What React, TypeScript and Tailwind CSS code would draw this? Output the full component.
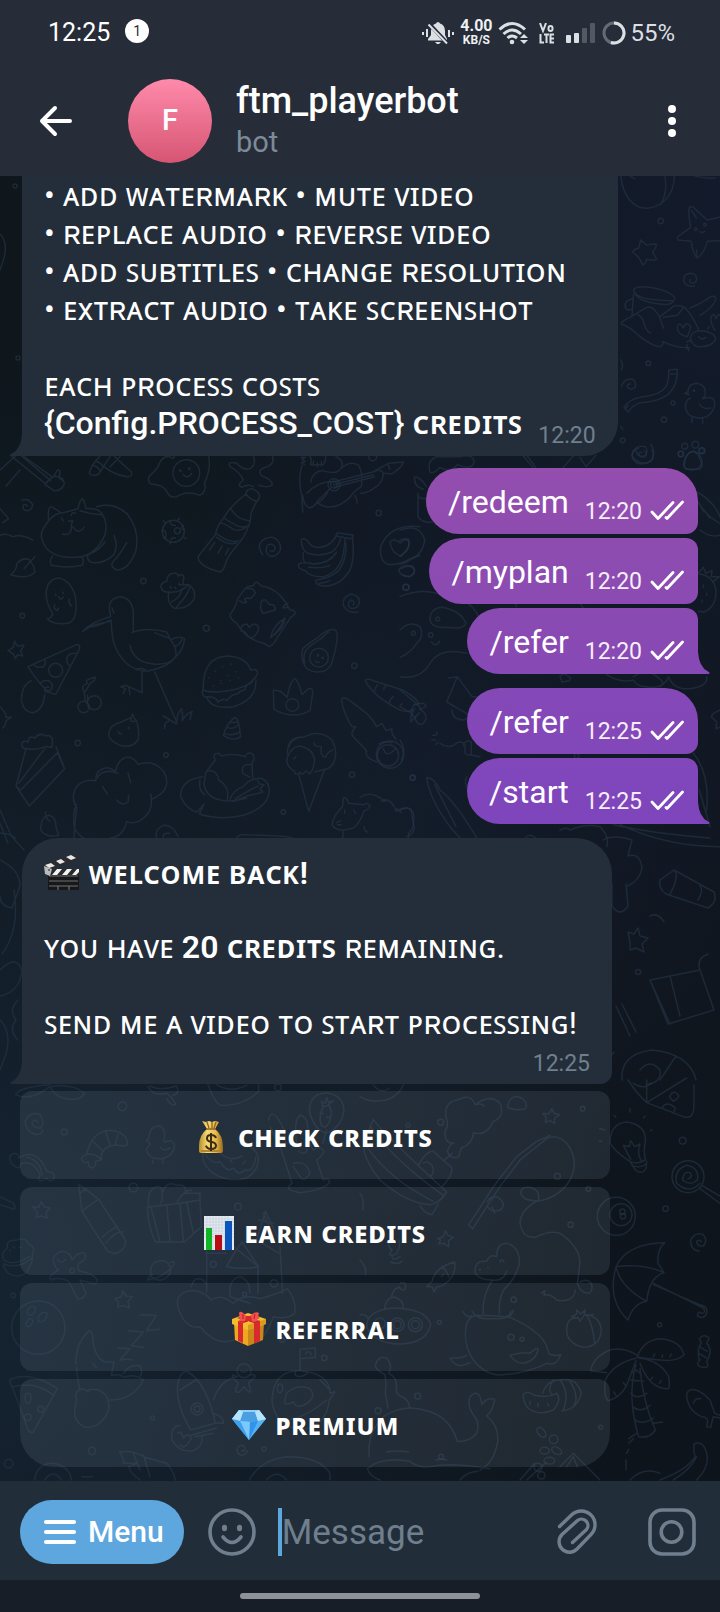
import type { ReactNode } from "react";

const ROBOTO = "font-[Roboto,'Noto_Sans','Liberation_Sans',sans-serif]";

/* ---------- wallpaper ---------- */

function Doodles() {
  return (
    <svg
      aria-hidden="true"
      className="absolute inset-x-0 bottom-0 h-[1305px] w-full"
      viewBox="0 176 720 1305"
      preserveAspectRatio="xMidYMax slice"
      fill="none"
      stroke="#253647"
      strokeOpacity="0.62"
      strokeWidth="4.5"
      strokeLinecap="round"
      strokeLinejoin="round"
    >
      {/* upper right: beach ball, starfish, jar, chick */}
      <g transform="translate(600 170) scale(.33333)">
        <path d="M62 20C70 80 100 115 140 115C190 112 222 70 223 20M195 20C200 50 196 80 182 103M90 18l14 8M285 18q30 8 60 6" />
        <circle cx="182" cy="153" r="8" />
        <path d="M268 112Q278 104 290 122L322 150L366 140M366 212L322 214Q312 250 292 264Q278 250 274 214L234 210Q228 200 242 194L272 172Q264 130 268 112M300 184q6 8 14 0M290 240v20M275 122l14 22" />
        <circle cx="287" cy="178" r="4" /><circle cx="315" cy="164" r="4" />
        <path d="M122 210L138 224L168 222Q172 228 158 246L170 268Q164 274 140 268Q134 286 128 284L116 262L98 246Q98 240 116 234Z" />
        <path d="M284 348Q258 352 251 334Q249 312 270 310Q290 310 290 328Q288 340 276 340Q266 338 270 328" />
        <path d="M100 362Q105 346 150 352Q210 362 224 384Q222 408 180 402Q110 394 100 362M104 368Q120 392 222 392M98 386Q72 390 76 412Q80 424 94 418M100 375L96 440M64 462Q60 456 90 442L140 412Q160 404 180 444Q186 460 190 474M64 462Q90 470 120 500Q160 530 180 530Q192 526 188 514Q220 532 268 534M114 434Q130 444 134 466Q140 484 152 490M180 440L222 408Q240 404 256 414Q280 440 296 480M270 414Q300 402 320 388Q340 372 348 384Q344 410 300 436M190 442L232 436L250 414" />
        <path d="M272 500Q280 476 316 484Q350 492 346 510Q330 534 292 530Q270 520 272 500M296 500q10 12 22 2M262 500Q230 494 232 470Q238 452 250 474Q258 450 272 470Q270 486 262 500M344 480Q326 450 336 436Q344 428 348 446Q356 428 360 436M260 516l12-6M266 542l-6-18M322 478l6-8" />
        <circle cx="145" cy="580" r="7" /><circle cx="219" cy="699" r="6" /><circle cx="192" cy="749" r="8" /><circle cx="68" cy="811" r="7" />
        <path d="M206 600L232 598Q234 650 200 676Q170 696 120 698Q98 706 84 726L72 712Q90 684 130 680Q180 676 198 650Q208 630 206 600ZM212 612h16M76 718l8-12" />
        <path d="M64 648Q76 622 98 628Q112 640 104 654Q92 662 82 652Q80 640 92 642M62 570q10 14 2 30M62 770l6 8" />
        <path d="M264 670Q262 642 290 640Q316 644 316 668Q314 684 308 686Q346 674 344 704Q336 744 298 744Q256 742 256 706Q258 690 272 684M264 664l-10 6 12 4M298 702q10 18 34 12M276 744v14M308 744v16" />
        <circle cx="282" cy="662" r="2" />
        <path d="M152 822Q168 846 156 870Q138 886 112 880Q90 866 98 844Q112 824 136 830Q146 844 136 860Q124 866 116 854Q118 844 126 848" />
        <path d="M254 880Q256 848 278 844Q296 848 300 870Q312 886 300 898H258Q250 892 254 880" />
        <circle cx="254" cy="829" r="9" /><circle cx="286" cy="824" r="10" /><circle cx="306" cy="842" r="9" /><circle cx="243" cy="852" r="8" />
      </g>

      {/* middle */}
      <g transform="translate(0 450) scale(.33333)">
        <path d="M30 15L135 100M70 18L158 82M60 14L152 92M135 104Q145 88 162 80Q174 50 180 64L178 84Q200 96 190 108Q180 124 162 122L135 104M162 80Q186 78 192 96" />
        <path d="M300 18Q270 50 268 70Q280 82 296 72Q310 50 330 20M344 20L394 66Q400 80 380 80Q340 74 312 50M276 46q16 2 24 16M360 20L330 50M286 34q16 4 22 14" />
        <path d="M478 40Q490 15 510 20Q520 30 524 18M478 40Q472 60 450 76Q440 90 452 102Q490 104 500 124Q510 146 530 140Q560 120 600 136Q620 128 614 98Q634 56 626 20" />
        <circle cx="559" cy="69" r="40" /><circle cx="541" cy="62" r="2" /><circle cx="568" cy="56" r="2" />
        <path d="M550 74q14 14 25-4M66 150Q86 144 98 164Q96 182 80 182Q66 180 70 166Q76 160 82 168" />
        <path d="M690 50Q680 32 710 40Q728 62 750 56Q770 42 760 20M690 50Q720 66 730 90Q708 106 726 112Q744 100 760 110M818 20Q826 44 790 54Q770 64 786 78Q820 90 816 106Q800 114 776 106" />
        <path d="M738 132Q738 116 756 116Q782 128 778 142L772 154Q750 150 738 132M738 132Q690 170 672 202Q650 230 646 254Q610 300 594 320Q596 350 660 366Q672 364 680 330Q690 310 720 276Q746 240 752 206Q750 190 770 154M694 178Q710 208 748 212M672 204Q690 216 708 226Q730 236 746 226M660 218L682 226L700 238Q720 246 738 232M648 250Q690 282 716 272M650 262Q690 290 710 278M628 300l16-22M654 310l12-22M676 314l10-18" />
        <path d="M130 236Q156 188 190 188L234 176Q240 146 248 146Q256 160 258 176Q290 174 304 188Q326 220 314 256Q286 318 230 322Q170 326 140 296Q114 260 130 236M146 210Q142 176 152 170Q166 176 180 186M290 170Q340 156 380 190Q420 240 408 300Q388 360 350 360Q330 352 338 336Q356 320 380 278M342 256Q356 290 340 316Q310 342 276 338Q258 330 264 314Q300 300 314 276M158 318Q146 330 154 346Q200 356 246 346Q254 332 246 322M184 204l6 8M214 196q2-12 14-6M206 214l12-2-4 12q2 36-26 28M218 230q16 26 34 2M240 182q30 10 64 12" />
        <path d="M32 374Q50 362 50 342Q66 322 86 328Q106 350 104 366Q84 390 32 374M72 356L104 320M0 176L26 206L8 218M0 256Q20 248 38 260Q66 252 98 270" />
        <circle cx="520" cy="244" r="33" /><circle cx="532" cy="242" r="9" />
        <path d="M486 242q10-4 12 10t-8 12M510 214q2 14 16 12M548 226q-8 10 4 14M512 270q4-10 14-6M496 218l-6-6M534 210l4-6M552 262l6 4M512 276l-2 6" />
        <path d="M788 314Q774 296 780 280Q794 260 818 262Q842 270 842 298Q830 324 808 318Q792 304 802 286Q818 276 826 294Q822 308 810 302" />
        <path d="M904 22h12l-10 6 10 6-12 4 10 6M906 46Q892 90 906 138L908 186M930 20Q936 30 932 44H970Q980 30 976 18M940 34v12M952 38v12M964 34v12M1008 20Q1030 30 1026 50M932 96Q940 60 970 62Q1010 76 1022 56Q1050 30 1076 46Q1090 70 1084 110Q1060 124 1050 142Q1010 180 970 168L954 160Q980 140 984 122M920 130Q960 90 1004 96M908 136Q912 170 930 174Q944 170 956 150L990 116M1000 96L1118 66Q1140 54 1150 68Q1150 100 1120 116Q1100 130 1082 130M1000 104L1120 74M1002 112L1124 80M1118 66L1166 40L1210 36Q1206 52 1176 72L1154 70M1164 44l6 14M1064 136q8 12 8 24" />
        <circle cx="1002" cy="104" r="18" /><circle cx="1002" cy="104" r="10" /><circle cx="1136" cy="189" r="8" /><circle cx="1118" cy="20" r="12" />
        <path d="M904 270Q908 262 922 272Q936 296 960 292Q1000 286 1012 248L1060 256Q1062 264 1048 266L1010 258M904 270Q904 300 924 310Q960 322 996 306Q1016 290 1022 266M910 308Q906 330 916 338M896 342Q910 334 940 342Q990 340 1010 306M896 342Q892 358 916 362Q930 382 970 380Q1020 366 1030 310L1036 264M1058 266Q1064 330 1050 360Q1020 410 970 408Q944 406 948 390Q990 386 1016 362Q1040 330 1038 280M926 352Q970 356 990 346M958 400q20-2 32-8" />
        <path d="M1074 486Q1044 492 1030 466Q1026 440 1054 432Q1080 436 1078 460Q1070 480 1050 474Q1038 460 1054 450Q1066 454 1060 466" />
        <path d="M1260 230Q1170 220 1142 290Q1138 340 1170 344Q1210 342 1230 326L1260 316M1170 276Q1180 262 1196 276Q1206 262 1226 268Q1236 290 1204 318Q1174 310 1170 276M1196 360Q1210 340 1240 350Q1250 372 1230 380Q1200 380 1196 360" />
        <circle cx="1218" cy="412" r="9" /><circle cx="430" cy="393" r="8" /><circle cx="67" cy="497" r="7" /><circle cx="619" cy="535" r="9" /><circle cx="1063" cy="647" r="8" />
        <circle cx="233" cy="879" r="8" /><circle cx="498" cy="915" r="7" /><circle cx="1056" cy="974" r="8" /><circle cx="850" cy="1086" r="7" /><circle cx="1238" cy="983" r="7" />
        <path d="M138 430Q142 386 176 384Q214 392 226 440Q236 506 206 520Q160 526 142 506Q156 504 158 490Q138 460 138 430M166 432l2 4M188 426l2 4M176 440q4 14 14 2M164 464q-6 10 8 18l4-8M208 448q-4 14 8 20" />
        <path d="M482 410Q486 396 500 394Q502 370 522 370Q534 368 534 378Q550 368 552 384Q546 400 552 406M482 410Q488 428 506 426Q500 460 522 474Q560 480 582 448Q590 420 566 404L536 404M506 426Q540 430 566 404M514 456Q540 446 546 416M530 470Q560 440 570 410M510 410l4 4M524 412l4 4M536 400l4 4" />
        <path d="M332 500L328 476Q326 444 362 440Q394 444 400 484L400 546M332 500Q280 512 248 544Q280 520 334 514M262 530q20 4 70-20M336 474l6 16M334 512Q334 570 350 600Q380 660 440 664Q510 650 526 620M396 548Q440 530 500 546L512 570Q530 590 528 620Q510 646 460 642Q400 636 390 586M512 570Q530 556 554 566Q550 600 528 620M524 590Q540 584 546 568M464 548L510 566M408 660Q420 650 436 660M426 664V728L378 706L362 710L376 716L370 730M386 710L390 734M464 666L530 816M490 798L530 822Q530 790 544 776Q550 800 546 812Q560 790 576 784L570 808M494 836q-2-20 12-22" />
        <path d="M690 494Q710 466 712 448Q726 426 740 412L762 406Q762 394 774 398L784 408Q830 414 856 456L870 480Q884 478 886 492L872 502Q840 550 820 582L808 590L792 580Q740 570 710 520Q690 506 690 494M742 416Q760 414 766 428Q754 450 744 444Q726 444 740 456Q730 462 718 452M782 470Q782 446 796 450Q806 460 808 464Q826 460 826 480L790 490Q782 484 782 470M724 544Q720 522 740 522L748 532Q764 512 776 532Q776 550 756 564L744 560Q734 540 724 544M856 504Q820 524 812 562Q850 540 856 504M820 556Q844 530 850 512M864 460Q846 468 850 474L866 472" />
        <path d="M24 602L40 592L44 574L52 588L72 586L62 602L68 618L52 614L46 626L40 612Z" />
        <path d="M84 650L230 584Q242 582 238 598L168 732Q150 736 120 700Q96 670 84 650M102 644Q110 656 130 650Q140 640 134 630M226 610Q200 610 200 630Q204 650 212 646M122 700Q128 690 146 692Q160 700 156 716Q136 734 134 720Q134 708 146 712M94 692Q66 704 64 750Q70 786 96 788Q128 786 134 734" />
        <circle cx="167" cy="661" r="21" />
        <circle cx="251" cy="771" r="17" /><circle cx="283" cy="758" r="21" /><path d="M256 754L252 724Q240 708 262 700Q250 690 286 682Q286 694 270 700L256 724M262 736L264 752" />
        <path d="M610 720Q606 620 684 618Q740 622 752 660Q776 654 772 672Q750 720 652 726Q620 726 610 720M608 720Q604 740 620 742Q634 780 700 770Q770 750 768 690M622 740Q650 740 654 756Q672 742 680 752Q698 730 712 732Q724 720 734 720Q736 704 752 700L768 680" />
        <path strokeDasharray="1 26" d="M626 684Q660 640 720 640M640 708Q670 680 730 656M664 700Q690 690 726 680" />
        <path d="M916 650Q900 626 908 596Q930 576 954 562Q990 530 1008 542Q1016 556 1006 600L994 644Q980 668 950 666Q926 664 916 650M914 640Q904 610 930 588L966 564Q978 550 986 546" />
        <circle cx="957" cy="623" r="28" /><circle cx="968" cy="624" r="2" /><circle cx="954" cy="616" r="2" /><path d="M946 632q4 8 12 4" />
        <path d="M820 720L842 724L862 742Q870 690 886 686Q898 700 906 734L926 716Q940 712 938 730L930 782Q880 810 822 778Z" /><circle cx="877" cy="765" r="19" />
        <path d="M1096 692Q1100 684 1120 692L1208 720Q1250 744 1256 760M1096 692Q1120 740 1200 780Q1230 790 1244 776M1160 706q-10 4-8 14M1180 740q-10 6-12 20M1132 704q-6 10-8 18M1244 776Q1230 800 1232 816L1258 788M1242 764Q1260 760 1260 780M1200 766l6-4" />
        <path d="M1024 748Q1030 738 1050 752L1100 790Q1120 810 1130 830L1146 820L1158 842L1176 836Q1172 850 1188 868M1024 748Q1030 790 1056 830H1068Q1048 850 1060 860L1100 902Q1090 920 1130 936M1138 882Q1150 872 1176 878" />
        <circle cx="1170" cy="914" r="41" /><circle cx="1164" cy="916" r="32" /><path d="M1150 896Q1160 926 1186 896" />
        <path d="M326 850Q330 824 364 816L394 802L398 792L402 804L408 810Q420 840 414 870Q396 896 360 886Q324 870 326 850M394 802Q386 820 410 812M354 844q4 10 10 6M386 832v4" />
        <path d="M670 856Q680 820 704 802L712 808Q720 830 722 860Q700 876 670 856M682 832Q700 840 714 826M672 850Q696 860 720 846M690 816q10 4 24-2" />
        <path d="M66 888Q64 868 84 876Q86 854 104 864Q120 846 136 858Q156 852 158 874L156 892L136 890Q110 902 80 896Q70 898 66 888M78 896L48 1008L88 1068L194 956L168 890M56 1000L134 896M62 1020L172 908L194 956M48 1008l10 10" />
        <path d="M222 1164Q222 1150 230 1072Q214 1050 224 1020Q240 986 288 992Q284 960 316 954Q326 950 346 964Q356 920 390 922Q410 930 414 944Q460 926 492 966Q520 1020 454 1048M292 984Q300 964 330 964L354 970M452 1032Q464 1086 420 1112Q400 1124 380 1114Q370 1160 330 1164M230 1064Q218 1080 222 1130Q230 1150 250 1164M384 968L392 998M308 1010L322 1032M350 1050Q366 1070 384 1056L386 1036" />
        <path d="M122 1136Q124 1100 146 1096Q168 1100 168 1130L176 1156Q150 1162 134 1152Q122 1144 122 1136M136 1086Q138 1110 150 1114" />
        <path d="M612 1000L618 966L646 930Q636 912 652 910Q660 910 664 918Q700 908 736 920Q740 904 758 912Q768 926 756 938L758 984M620 964Q650 956 656 990Q690 1010 682 1048M612 1000Q616 1040 660 1050Q700 1060 740 1038L776 1030L788 1026L780 1016L792 1004L778 1002L770 986Q744 990 730 1010Q700 1020 690 1048M706 1046L750 1020L774 1008M700 1054L740 1044M752 944Q722 940 728 970L750 982M608 980Q540 990 542 1040Q560 1080 592 1086L612 1062L598 1092Q660 1112 730 1096Q810 1070 808 1016Q802 984 774 984M600 990Q594 1020 614 1034" />
        <path d="M862 912Q862 858 910 862Q960 836 996 870Q1020 920 992 950Q980 960 974 958M944 930Q940 960 930 972Q920 960 914 966Q904 980 900 966Q884 980 884 964Q860 950 860 930Q870 890 900 888Q940 896 944 930M944 966L974 958L926 1084L896 972M942 878Q940 890 964 890Q960 920 976 922Q984 904 998 900M888 920q-6 8-8 6M868 890Q870 870 900 862" />
        <path d="M996 1124Q1000 1096 1028 1070L1030 1044Q1040 1040 1046 1060L1092 1064Q1104 1056 1110 1068Q1104 1080 1092 1082Q1080 1120 1060 1134Q1010 1150 996 1124M1080 1042Q1110 1020 1150 1050Q1176 1046 1188 1084Q1236 1056 1236 1100Q1248 1130 1226 1150L1226 1164M1030 1140L1028 1164M1034 1080v10M1062 1080l4 10M1010 1118l12-6M1012 1124h12M1092 1130q2 14 10 16M1144 1052l12 2M1190 1076l14 12" />
        <path d="M470 1164Q462 1140 490 1126Q520 1124 534 1160M490 1164Q486 1148 508 1150M710 1164Q716 1152 740 1154L834 1158Q860 1158 876 1164M0 1080L34 1158L72 1200M0 1120L24 1180M0 1150Q30 1150 46 1164M0 770Q20 790 18 802L34 802L18 812Q16 830 8 834" />
      </g>

      {/* right of the middle, around the outgoing messages */}
      <g transform="translate(400 450) scale(.33333)">
        <path d="M90 66Q80 30 110 20H180Q220 10 222 36Q216 62 172 44Q150 70 120 52Q100 74 90 66M370 18L400 54M382 18L408 54M488 54L520 18M540 22l18 28 30-34" />
        <path d="M756 0Q768 26 744 38Q710 44 696 16Q700 0 716 -6M708 0Q712 26 736 16Q744 8 732 2" />
        <path d="M850 44Q856 10 880 4Q900 8 906 30Q908 54 880 60Q856 60 850 44" /><circle cx="842" cy="12" r="8" /><circle cx="905" cy="2" r="8" />
        <path d="M44 80Q60 80 80 110M44 80Q40 110 70 118M54 130V200Q70 220 100 216M54 140Q70 150 80 144M0 240Q60 220 74 270Q70 320 0 344M0 280Q20 260 26 276Q30 300 0 318M4 356Q30 340 44 360Q40 386 10 376" />
        <circle cx="18" cy="412" r="9" />
        <path d="M0 440Q60 416 110 430Q210 440 236 500M0 680Q60 690 90 640Q120 590 200 610M90 510Q90 476 124 472Q180 480 198 520Q190 540 140 532Q94 534 90 510M0 540Q30 510 60 530Q74 560 50 580Q30 610 0 622" />
        <circle cx="40" cy="550" r="6" /><circle cx="113" cy="507" r="6" /><circle cx="92" cy="555" r="7" /><path d="M94 576q14 18 24-2M350 470Q344 460 352 452M540 460l14 20" />
        <path d="M880 120Q940 150 960 200M890 150Q920 200 960 220M900 240Q930 264 960 256M902 170l10 16M920 190l8 14" />
        <path d="M896 372Q940 376 948 420Q950 470 912 486L896 484M892 372L910 352L918 370L936 362L934 380L958 380L938 396M910 406v6M920 430v6M906 450v6" />
        <path d="M146 684L172 680L216 740L240 740M172 680L140 756L216 800M156 780Q156 808 190 810Q210 806 210 780M620 674Q660 700 700 690Q710 710 740 710Q790 720 806 680Q820 720 870 716Q924 710 920 680M700 680Q740 650 770 680Q800 700 780 710M480 680Q490 664 512 684L508 692L486 696Z" />
        <path d="M0 720L54 764M0 770L36 790M46 762Q20 790 44 800Q50 830 70 820Q90 800 60 776Q90 770 70 760ZM98 856h8M110 846v8M96 870h10M108 884l6-8M120 880Q150 900 170 878Q190 870 196 890Q190 920 210 914L240 920M190 886Q198 866 214 876V912M0 870Q20 900 4 930" />
        <circle cx="38" cy="983" r="8" /><circle cx="530" cy="918" r="7" />
        <path d="M80 984Q100 980 120 1020Q170 1060 230 1164M80 984Q90 1050 150 1130L180 1164M104 1004L168 1130M200 980Q190 1000 206 1020M0 1080Q50 1060 40 1120Q50 1150 20 1160" />
        <path d="M960 780L940 790L934 800L950 816L948 836L960 832M880 910Q930 970 920 1080M898 1020L930 1130M480 1140Q500 1130 510 1140Q560 1120 600 1130Q630 1160 620 1190M640 1124Q760 1150 930 1164M660 1124Q800 1190 960 1190M376 1164q14-16 30 0" />
      </g>

      {/* lower left, partly under the keyboard */}
      <g transform="translate(0 1080) scale(.33333)">
        <path d="M46 44Q60 20 150 14M46 44Q90 66 150 20Q220 10 254 40Q240 66 190 54Q160 44 150 20M444 20Q460 50 500 40Q516 50 528 74Q514 80 500 56M450 18Q480 34 530 18Q540 40 520 46M624 14Q640 60 660 76Q730 80 776 34V14M650 14Q690 40 740 16" />
        <circle cx="834" cy="22" r="10" /><circle cx="367" cy="79" r="13" /><circle cx="193" cy="156" r="9" /><circle cx="400" cy="323" r="13" /><circle cx="714" cy="380" r="10" />
        <path d="M128 150Q126 166 102 162Q74 150 76 122Q92 92 120 104Q136 128 122 144Q100 146 96 128Q104 114 114 126" />
        <path d="M246 240Q240 230 260 224Q270 170 310 154Q350 144 376 170Q390 200 370 198Q340 190 316 206Q300 220 304 240L286 244Q290 260 274 264Q264 260 266 246Q250 250 246 240M262 222Q290 220 304 240M280 186l26 24M316 154l14 40M354 164l-8 28" />
        <path d="M446 176L438 182L448 186Q444 190 452 192Q436 206 440 214Q450 240 484 236Q520 230 524 196Q518 178 500 184Q490 190 492 180Q500 150 480 138Q450 134 446 176M482 202Q490 216 510 204M458 240v10M488 238v12" />
        <path d="M34 250Q20 224 46 220Q60 224 56 234Q110 200 140 274Q168 276 162 296Q150 310 140 294Q120 310 114 296Q124 284 118 280Q100 240 64 250Q60 270 46 260Q40 256 34 250M80 232Q120 240 126 284" />
        <path d="M610 214Q600 250 640 280Q690 310 740 294Q780 270 774 226Q760 200 720 174M616 224Q640 256 660 244Q680 280 700 264Q716 290 734 270Q760 280 768 230M660 218q30 30 66 10M690 240l6 6M730 250l6-6" />
        <path d="M928 90Q930 40 980 38Q1030 46 1032 90Q1026 140 980 160Q940 150 928 90M970 80Q954 110 964 136Q980 150 990 120Q1000 90 984 76L970 80L964 64L976 70L980 52L986 68L1000 62L984 76M960 100h10M980 112h10M980 150L968 190" />
        <path d="M806 120Q810 90 830 110Q860 150 856 190Q880 180 890 190Q880 120 900 106Q926 110 924 160Q930 200 940 210Q960 196 970 210Q976 220 950 240L970 300Q990 290 988 308Q970 330 900 338Q860 330 866 320L876 310L844 210L810 140M896 214q20 14 26-6M880 250Q920 240 930 280Q910 310 900 290L880 260" />
        <path d="M98 380L116 382L124 364L132 380L150 384L138 396L142 414L124 408L108 412L112 396ZM0 350L40 370Q48 380 42 388L0 374M236 312L296 358L376 480Q380 500 360 514Q340 528 320 510L246 394ZM238 330L246 394Q270 372 296 358M240 340l18-14M306 472Q330 450 352 440M318 488Q350 450 370 456" />
        <path d="M442 382L540 370L600 360L604 440L554 486L466 486Q444 440 442 382M540 370L550 484M452 378L480 484M500 374L510 484M560 366L580 460M446 376Q440 330 470 320Q488 318 486 340Q500 300 530 316Q560 310 556 340L600 340L600 360M486 340Q490 360 480 372M530 370Q550 330 576 330" />
        <path d="M12 540Q0 520 22 504Q16 480 50 480Q80 470 84 492Q110 500 96 526Q100 546 88 560M12 540Q40 560 88 530M12 552Q50 570 94 536M10 556Q20 590 56 588Q80 584 88 560M28 510l4 4M40 500l4 4M60 500l4 4" />
        <path d="M160 536Q170 514 190 514Q214 520 216 540Q240 510 256 522Q260 540 236 550Q230 566 240 574Q280 580 292 600Q290 616 276 610L240 600L258 640Q250 660 232 656L206 604Q180 590 152 600Q146 590 160 580L176 570Q160 560 160 536M172 540q14 14 24-2" />
        <circle cx="217" cy="572" r="7" /><circle cx="40" cy="646" r="7" />
        <path d="M452 580Q450 540 490 542Q516 550 510 580Q490 610 462 596Q450 590 452 580M510 548Q530 540 520 556Q490 594 444 600Q444 590 456 584" />
        <path d="M344 656L364 650L368 632L378 648L398 650L384 664L388 684L370 676L354 682L356 666Z" />
        <circle cx="115" cy="743" r="80" /><ellipse cx="94" cy="692" rx="10" ry="15" transform="rotate(40 94 692)" /><ellipse cx="128" cy="711" rx="10" ry="17" transform="rotate(40 128 711)" /><ellipse cx="88" cy="728" rx="8" ry="13" transform="rotate(30 88 728)" />
        <path d="M620 636V510L648 490L676 510M848 640L840 500M676 480L776 560Q730 570 680 560Q700 520 726 486L776 560M774 560V640M770 480L796 394L840 486M690 650V620Q700 590 722 590Q750 600 750 640M690 650L750 670M618 520H680M770 480L838 520M776 420L820 430M790 400L820 470M574 620Q580 590 606 598L620 612M536 690Q520 640 570 632Q610 630 634 660Q660 640 700 670Q730 640 780 656Q840 640 862 626Q890 660 884 700Q860 720 820 710Q790 790 760 780Q730 764 700 780Q650 800 600 740Q560 750 536 690" />
        <circle cx="640" cy="553" r="9" /><circle cx="822" cy="610" r="11" /><circle cx="734" cy="643" r="6" />
        <path d="M228 852Q226 790 268 752Q280 756 278 780Q284 830 312 846L342 846L334 886L356 884L374 892Q400 880 430 900Q400 960 330 960M278 850l12 14M230 860Q232 900 240 930M370 880Q390 850 420 858Q430 876 420 890M230 960Q220 930 250 926Q270 940 264 930Q300 920 320 950Q336 980 316 1010Q290 1050 250 1040Q220 1020 224 990Z" />
        <path d="M354 804L390 806L360 840Q384 836 396 840M384 752L430 756L394 798L430 802M420 704L468 706L440 752L478 748" />
        <path d="M28 900Q90 870 172 926L100 1056Q90 1060 84 1050Q60 980 28 900M34 922Q100 900 160 944" /><ellipse cx="84" cy="955" rx="9" ry="15" /><circle cx="83" cy="1012" r="10" /><circle cx="122" cy="988" r="9" />
        <path d="M572 1050Q520 960 536 900Q544 870 564 876Q620 910 646 1030L572 1050M540 930L588 900M574 1066L650 1044M584 1070L640 1060M640 1000Q672 1010 670 1030L646 1028M640 960Q660 900 710 890M540 1036Q510 1040 516 1080Q540 1120 580 1112Q610 1100 606 1070M534 1060q10-10 16 14q14-20 24 0q-20 40-34 20" /><circle cx="591" cy="987" r="18" /><circle cx="591" cy="987" r="9" />
        <circle cx="732" cy="872" r="21" /><path d="M722 872q10 10 18 0M712 890L698 884Q694 894 706 900L714 910L706 934Q716 944 732 920Q746 940 752 936L746 908L766 890Q764 880 750 886" />
        <path d="M816 960Q820 870 900 872Q990 880 990 940Q1010 930 1002 940L988 960Q980 1040 900 1050Q820 1030 816 960M886 872V886Q900 894 920 882V874M900 872V808L946 804V832L900 836M916 822q10-14 18 2M860 940Q890 910 930 926Q950 950 920 970Q890 990 880 966Q850 980 854 960ZM866 1020Q920 1010 980 960M960 900L990 930" /><ellipse cx="840" cy="925" rx="8" ry="13" />
        <circle cx="973" cy="834" r="8" /><circle cx="846" cy="780" r="7" /><circle cx="457" cy="1014" r="6" /><circle cx="276" cy="1113" r="11" /><circle cx="26" cy="1151" r="13" /><circle cx="792" cy="1107" r="6" />
        <path d="M744 1112Q730 1134 714 1120Q706 1100 724 1096Q740 1100 734 1112L724 1112M104 1200Q110 1150 160 1150Q210 1160 214 1200M134 1200q26-36 50 0M358 1116Q400 1110 430 1130L500 1150Q520 1170 526 1200M358 1116Q370 1130 372 1150L410 1150L386 1160Q390 1180 420 1200M400 1120L420 1170M430 1124L450 1190M748 1200Q780 1140 860 1130Q960 1130 990 1180V1200M800 1200q30-34 60 0M246 1190h32" />
      </g>

      {/* lower right */}
      <g transform="translate(360 1080) scale(.33333)">
        <path d="M0 50Q30 70 80 60Q120 44 130 14M40 14Q60 44 90 24M258 110Q250 64 300 58Q330 40 346 74Q390 40 420 70Q436 110 400 124Q380 170 340 158Q340 190 304 204L296 230Q270 240 262 214Q270 190 282 190Q250 190 256 150Q268 140 258 110M346 74q20-6 26 4M442 82Q450 40 484 54Q506 70 496 86Q466 94 442 82" />
        <circle cx="242" cy="127" r="9" /><circle cx="144" cy="136" r="6" /><circle cx="668" cy="86" r="7" /><circle cx="592" cy="289" r="9" /><circle cx="632" cy="434" r="8" /><circle cx="685" cy="327" r="7" />
        <path d="M548 100L566 102L576 86L582 100L598 104L584 114L584 130L570 122L556 128L558 112Z" />
        <path d="M40 118Q60 150 260 336Q240 370 210 374Q140 370 60 300Q20 250 12 212Q20 160 40 118M32 140Q100 240 250 346M20 200Q90 300 220 364M174 258Q200 210 220 214L276 264Q276 290 246 320M190 250Q200 240 216 256Q226 280 210 290M254 240L276 220M180 376Q190 400 216 404L234 374" />
        <path d="M326 434Q350 400 400 320L470 230L530 184L570 166M338 446Q380 380 420 320L480 240L560 176Q590 160 620 190Q660 240 630 300Q600 350 540 362Q490 366 482 340Q484 318 510 322Q540 330 536 360Q480 390 480 430Q490 480 530 470Q570 450 600 460Q660 500 660 550L652 610Q660 640 688 640Q700 630 694 610Q680 594 660 606M326 434L338 446M382 366Q390 346 414 352Q440 370 424 388Q400 400 382 380M396 380l8 20M544 640l10-8-2 14Q570 640 590 660Q640 670 646 630" />
        <path d="M0 340Q14 360 8 390M90 480Q80 500 96 510L88 524Q100 530 110 520Q124 500 116 480M96 530Q100 545 120 530M92 546Q110 556 126 544M0 540Q20 560 16 584" />
        <path d="M232 476L250 470L256 452L264 466L280 472L266 482L266 500L252 490L236 492L242 480Z" />
        <path d="M346 580Q340 540 380 544Q390 520 410 530Q410 490 440 490Q480 500 478 550Q470 590 440 620Q416 640 418 702M346 580Q360 600 394 600Q430 606 440 574M396 602Q366 650 370 700M358 570l4-2M384 562v2M420 546q4-14 12 0M336 694Q350 720 400 716Q450 720 452 694M308 694Q320 714 334 708M460 690Q456 710 440 708M320 730Q306 790 340 840Q380 890 430 884Q500 880 560 850Q590 860 602 824Q580 830 566 820Q560 760 450 712Q400 706 350 706Q330 710 320 730M320 826Q300 836 270 834Q290 870 330 848M450 826Q490 814 510 820Q530 800 534 808Q530 840 490 850Q466 850 450 826" />
        <circle cx="453" cy="772" r="9" /><circle cx="486" cy="778" r="6" /><circle cx="461" cy="659" r="8" /><circle cx="238" cy="727" r="6" /><circle cx="173" cy="949" r="9" /><circle cx="54" cy="992" r="9" />
        <path d="M200 620L216 604Q226 560 284 546Q290 580 262 606Q240 624 230 620L222 636L216 620ZM246 560Q260 570 266 590M244 590l8-8" />
        <path d="M20 740Q20 690 100 684Q200 686 212 734Q200 790 120 792Q40 790 20 740M74 684Q80 650 104 652Q130 660 130 684M94 652Q100 620 120 624M120 610Q140 600 136 626Q126 636 116 620M0 704Q20 700 26 720" /><circle cx="166" cy="734" r="21" /><circle cx="112" cy="734" r="20" /><circle cx="166" cy="734" r="12" /><circle cx="112" cy="734" r="12" /><circle cx="60" cy="730" r="16" />
        <path d="M656 714Q620 710 620 750Q620 790 670 802Q720 800 724 750Q720 710 680 704Q700 740 704 792M656 714L634 710L650 702L650 690L662 702L676 690L672 706L700 704M656 714L660 724L670 710" />
        <path d="M46 860Q50 826 80 834Q100 860 86 880Q110 890 110 920Q104 940 122 948Q150 960 148 984M46 860Q60 880 74 882Q80 900 76 940Q80 960 84 984M28 1130Q20 1060 70 1010Q130 970 200 992Q270 1010 292 1084Q330 1086 350 1060Q360 1030 344 1010Q320 980 330 950Q350 930 360 950L366 974Q380 950 404 958Q400 990 380 1008Q420 1040 412 1090Q400 1150 360 1170M22 1166Q60 1130 150 1144Q180 1170 236 1156M80 1116Q110 1110 146 1116M22 1166Q30 1190 60 1200M236 1156Q290 1150 390 1166M300 1200q20-24 54-26M228 1140q14-4 32 0" /><circle cx="243" cy="1130" r="7" />
        <path d="M490 944Q500 930 520 944Q560 956 590 940Q606 960 580 990Q530 1010 500 980Q488 960 490 944M548 940Q560 900 600 900Q650 890 664 940Q650 990 606 992M580 900Q560 930 576 944M600 900Q630 940 610 990M630 904Q660 950 640 980M510 964v10M534 970v10M562 970l4 8" />
        <ellipse cx="544" cy="1057" rx="10" ry="17" transform="rotate(-40 544 1057)" /><circle cx="581" cy="1078" r="13" /><ellipse cx="554" cy="1112" rx="14" ry="10" /><ellipse cx="590" cy="1112" rx="10" ry="16" transform="rotate(-60 590 1112)" /><ellipse cx="568" cy="1142" rx="16" ry="10" /><circle cx="534" cy="1162" r="12" /><circle cx="544" cy="1186" r="11" /><circle cx="722" cy="1042" r="6" />
        <path d="M480 1200L524 1150M600 1160L640 1120L720 1200M500 1200L560 1146M620 1160l20-30 12 30" />
        <path d="M804 0Q830 40 860 68L970 110Q1000 120 1002 80V14M860 68V0M860 68L980 -6M820 10Q850 30 876 10M928 50Q940 30 950 40Q966 50 940 64ZM906 84Q920 60 946 84L940 100" />
        <path d="M750 190Q750 130 800 126Q860 134 856 186Q850 210 856 240M750 190Q770 220 810 244L826 270Q846 286 858 266L860 244M810 244Q830 256 856 240M816 256Q840 266 858 252M812 238L790 196L808 200L812 182L824 200L840 192Q830 220 844 242M762 106l6 6M810 86v10M856 108l-6 6M872 152l4-2M720 146l14 4M718 184h8" />
        <circle cx="968" cy="182" r="10" /><circle cx="917" cy="386" r="8" /><circle cx="899" cy="734" r="6" />
        <circle cx="984" cy="290" r="48" /><path d="M1020 310Q990 344 950 310Q940 270 980 256Q1020 264 1012 300Q990 320 968 300Q970 272 990 278Q1000 290 984 296M1028 318L1080 348M1020 326L1080 370" />
        <circle cx="769" cy="409" r="57" /><circle cx="783" cy="404" r="33" /><circle cx="787" cy="395" r="8" /><circle cx="789" cy="409" r="8" />
        <path d="M1018 514Q990 510 992 480Q1006 454 1030 464Q1044 484 1030 498Q1010 500 1010 484Q1020 476 1024 486" />
        <path d="M768 560Q800 490 914 488Q890 510 894 550L912 578Q900 580 890 590Q866 610 860 664Q820 670 804 720Q740 660 768 560M768 560Q850 550 912 578M768 560Q780 620 860 664M876 608L1030 684Q1040 700 1024 700Q1014 690 1012 708Q1030 720 1040 700Q1044 680 1024 676L880 614" />
        <path d="M832 830Q850 780 900 776Q960 780 972 824Q950 846 900 840Q860 836 832 830M832 826Q790 800 750 810Q700 830 692 872L740 878M830 834Q760 850 736 900Q730 950 744 962Q790 950 806 900L828 842M836 834Q900 840 926 890Q930 920 926 926Q870 930 840 850M828 854Q800 950 836 1070Q870 1076 886 1050Q850 970 840 866M814 880L830 870L844 884M812 900L850 904M812 940Q830 960 860 940M818 980Q840 1000 870 976M824 1020Q850 1036 880 1014M880 1030L908 1026M830 1060L806 1076M806 1090L820 1076M762 936l6 10M790 908l8 10M880 830l4-8M906 832l2-8M930 830l4-8M870 900l8-8M898 910l6-8M800 1120L806 1108M798 1140v30" />
        <path d="M1018 776Q1030 760 1048 774L1040 790Q1060 810 1040 846Q1050 864 1030 862Q1010 860 1014 846Q1024 836 1018 840Q1010 806 1024 790ZM1018 800L1042 814M1016 820L1040 834M980 940Q1000 910 1050 960L1064 1000L1080 1006M980 940Q980 990 1024 1010Q1050 1010 1040 1040L1052 1042L1060 1010L1080 1014M1000 970q6-16 22-14" />
        <path d="M1002 1092Q1030 1080 1040 1120Q1050 1160 1010 1200M1002 1092Q1000 1120 1006 1130Q980 1170 900 1200M1010 1130Q990 1170 940 1200M810 1200Q850 1160 900 1180" />
      </g>

      {/* either side of the welcome bubble */}
      <g strokeWidth="1.500">
        <path d="M603 840Q612 834 632 840L628 856Q640 852 642 868Q640 880 628 886M612 884v22q8 12 16 0l-2-22M660 880l14-10 40 22q4 10-6 16l-42-14q-8-6-6-14M674 870q6 6-4 24M700 886q4 4-2 14M650 916q8-4 14 6M628 932l6 2 4-6 2 8 8 2-6 6 2 8-8-4-6 2 0-8Z" />
        <path d="M650 980l50-10 14 40-46 14ZM650 980l20 44M670 976l10 40M700 970q-4-12 8-16M616 1006l14 30M622 1004l14 28" />
        <path d="M0 860q20 10 20 26l-8 22q-12-2-12-12M14 890q6 40-12 64M0 970q16-16 22 0q-2 22-22 26M18 1000q-10 10-2 20q-8 10 2 20M0 1020q12 12 6 34L0 1070" />
        <path d="M0 234q8 8 4 24l-4 12M20 452L0 470M20 470L6 486" />
        <path d="M622 1080Q620 1054 652 1050Q690 1054 696 1080M640 1070q10-12 20 0q2 12-12 14M676 1056l-16 24M614 1052l-8 10 4 12" />
        <circle cx="15" cy="186" r="2" /><circle cx="18" cy="358" r="2" /><circle cx="638" cy="972" r="2.500" />
      </g>
    </svg>
  );
}

/* ---------- emoji ---------- */

function Clapper() {
  return (
    <svg role="img" aria-label="clapper board" viewBox="0 0 36 40" className="mr-2 inline-block h-10 w-9 align-[-8px]">
      <path d="M4 17h31v21H5q-1 0-1-2z" fill="#17181a" />
      <path d="M5 24h29M5 29h29M5 34h29" stroke="#6e7073" strokeWidth="1.2" />
      <path d="M14 34v4M25 34v4" stroke="#6e7073" strokeWidth="1.2" />
      <path d="M4 17h31v6H4z" fill="#2b2b2d" />
      <path d="M8 23l5-6h5l-5 6zM18 23l5-6h5l-5 6zM28 23l5-6h2v3l-3 3z" fill="#f1f1f1" />
      <path d="M0 13L33 1l1 6L2 18z" fill="#2d2b2b" />
      <path d="M1 13l6-2 4 3-6 2zM12 9l5-2 4 3-5 2zM22 5l5-2 5 3-5 2z" fill="#e7e7e7" />
      <path d="M0 14l8 3-2 7-5-2z" fill="#b9bcbe" />
      <circle cx="5" cy="18" r="1" fill="#555" />
    </svg>
  );
}

function MoneyBag() {
  return (
    <svg role="img" aria-label="money bag" viewBox="0 0 26 34" className="h-[34px] w-[26px]">
      <defs>
        <linearGradient id="bag" x1="0" x2="1">
          <stop offset="0" stopColor="#b98d2c" />
          <stop offset=".35" stopColor="#f7da78" />
          <stop offset=".7" stopColor="#e5b94b" />
          <stop offset="1" stopColor="#96691d" />
        </linearGradient>
      </defs>
      <path d="M4 1l4 1 3-1 3 1 3-1 4 1-4 7q8 6 8 18v4q0 2-3 2H4q-3 0-3-2v-5Q1 15 9 9z" fill="url(#bag)" />
      <path d="M8 9h10M9 2l2 6M14 2v6M18 2l-2 6" stroke="#8b621b" strokeWidth="1.3" fill="none" />
      <path d="M3 31h20" stroke="#b5842e" strokeWidth="2" />
      <path d="M18 18q-1-3-5-3-4 0-4 3.400 0 2.600 4 3.400 5 .8 5 4 0 3.200-5 3.200-4 0-5-3.400M13 13v18" stroke="#3c2c12" strokeWidth="2" fill="none" />
    </svg>
  );
}

function BarChart() {
  return (
    <svg role="img" aria-label="bar chart" viewBox="0 0 30 34" className="h-[34px] w-[30px]">
      <path d="M0 0h30v34H0z" fill="#e4eaf0" />
      <path d="M0 3h30M0 6h30M0 9h30M0 12h30M0 15h30M0 18h30M0 21h30M3 0v34M6 0v34M9 0v34M12 0v34M15 0v34M18 0v34M21 0v34M24 0v34" stroke="#c4d0dc" strokeWidth=".7" />
      <path d="M2 12h6v22H2z" fill="#12b524" />
      <path d="M11 19h7v15h-7z" fill="#b80d12" />
      <path d="M21 5h7v29h-7z" fill="#0a56bd" />
    </svg>
  );
}

function Gift() {
  return (
    <svg role="img" aria-label="gift" viewBox="0 0 36 36" className="h-9 w-9">
      <path d="M3 12l14 5v18L4 29z" fill="#eca920" />
      <path d="M33 12l-16 5v18l15-6z" fill="#c9871a" />
      <path d="M1 8L17 2l18 6v5l-18 6L1 13z" fill="#f4bd30" />
      <path d="M17 14l18-6v5l-18 6z" fill="#d99a1f" />
      <path d="M7 10l5 2v20l-5-2zM23 11.500l6-2V30l-6 2.500z" fill="#d82a2d" />
      <path d="M12 5l17 5-6 2L6 7zM24 5L7 10l5 2 17-5z" fill="#c42228" />
      <path d="M17 7Q10-2 8 2l1 8q4 1 8-1 6 3 9 1l2-8q-4-3-11 5z" fill="#f4504f" />
      <path d="M15 5h5l1 5h-7z" fill="#d52b30" />
      <path d="M12 3v5M24 3l-1 5" stroke="#b91d23" strokeWidth="1" />
    </svg>
  );
}

function Gem() {
  return (
    <svg role="img" aria-label="gem stone" viewBox="0 0 36 32" className="h-8 w-9">
      <path d="M8 1h20l7 9-17 21L1 10z" fill="#55b3f5" />
      <path d="M8 1h20l7 9-17 3L1 10z" fill="#8ed2fb" />
      <path d="M12 3h12l3 9-9 1-9-1z" fill="#4a9fe0" />
      <path d="M12 3L8 1 1 10l8 2zM24 3l4-2 7 9-8 2z" fill="#b6e3fd" />
      <path d="M9 12l9 19 2-18z" fill="#7cc8fa" />
      <path d="M27 12l-9 19 1-18z" fill="#2f94ea" />
      <path d="M1 10l8 2 9 19z" fill="#3ea0ee" />
    </svg>
  );
}

/* ---------- small icons ---------- */

function StatusIcons() {
  return (
    <div className="flex items-center text-[#dcdfe3]">
      <svg aria-label="Sound off" role="img" viewBox="0 0 32 24" className="h-6 w-8" fill="currentColor">
        <path d="M0 11h2v3H0zM4 8h2v8H4zM26 9h2v7h-2zM30 11h2v3h-2z" />
        <path d="M16 1q1.500 0 2 1.500 5 1.500 5 7.500v4l2 4v1.500H6V18l3-4v-4Q9 4 14 2.500 14.500 1 16 1zM13 21h6l-2 2h-2z" />
        <path d="M6 1.500L25.500 22.500" stroke="#262c38" strokeWidth="4" />
        <path d="M6.500 3.500L25 22.500" stroke="currentColor" strokeWidth="2" />
      </svg>
      <div className="ml-1 flex w-9 flex-col items-center font-bold text-[#eef0f2]">
        <span className="text-base leading-[14px]">4.00</span>
        <span className="text-xs leading-[14px]">KB/S</span>
      </div>
      <svg aria-label="Wi-Fi" role="img" viewBox="0 0 31 24" className="ml-1 h-6 w-[31px]" fill="none" stroke="currentColor" strokeWidth="3">
        <path d="M1.500 8.500Q14 -3.500 27 8.500M5.500 13Q14 5 23 13M9.500 17Q14 13 19 17" />
        <circle cx="14" cy="21" r="2.300" fill="currentColor" stroke="none" />
        <path d="M26 13l4 4h-8zM26 23l4-4h-8z" fill="currentColor" stroke="none" />
      </svg>
      <svg aria-label="VoLTE" role="img" viewBox="0 0 16 21" className="ml-2.5 h-[21px] w-4" fill="none" stroke="currentColor" strokeWidth="2">
        <path d="M1 0l3 8 3-8M1.500 11v8.500H5M5 11.500h5M7.500 11.500V20M15 11.500h-3.500v8H15M11.500 15.500H15" />
        <rect x="9.500" y="3" width="4" height="5" rx="2" />
      </svg>
      <svg aria-label="Signal" role="img" viewBox="0 0 29 20" className="ml-[11px] h-5 w-[29px]" fill="currentColor">
        <rect y="12" width="5" height="8" rx="1" />
        <rect x="8" y="10" width="5" height="10" rx="1" />
        <rect x="16" y="5" width="5" height="15" rx="1" opacity=".25" />
        <rect x="24" width="5" height="20" rx="1" opacity=".25" />
      </svg>
      <svg aria-label="Battery" role="img" viewBox="0 0 24 24" className="ml-[7px] h-6 w-6" fill="none" stroke="currentColor" strokeWidth="3">
        <circle cx="12" cy="12" r="10" opacity=".35" />
        <path d="M12 2A10 10 0 1 1 8.900 21.500" />
      </svg>
      <span className="ml-1 text-2xl leading-7">55%</span>
    </div>
  );
}

function Checks() {
  return (
    <svg role="img" aria-label="Read" viewBox="0 0 34 20" className="h-5 w-[34px]" fill="none" stroke="white" strokeWidth="2.800" strokeLinecap="round" strokeLinejoin="round">
      <path d="M2 12L8 18.500L23 2.500M16 17.500L17 18.500L32.500 2" />
    </svg>
  );
}

function Tail({ side, className }: { side: "left" | "right"; className: string }) {
  const place = side === "left" ? "right-full -scale-x-100" : "left-full";
  return (
    <svg aria-hidden="true" viewBox="0 0 12 22" className={`absolute bottom-0 h-[22px] w-3 ${place} ${className}`} fill="currentColor">
      <path d="M0 0Q1 15 10 19.500Q13 21 10.500 22H0z" />
    </svg>
  );
}

/* ---------- messages ---------- */

function Outgoing({ text, time, tone, tailTone, corners, tail }: {
  text: string; time: string; tone: string; tailTone: string; corners: string; tail?: boolean;
}) {
  return (
    <div className={`relative flex h-[66px] w-fit items-end rounded-l-[33px] pr-3.5 pl-[22px] ${tone} ${corners}`}>
      <span className="mb-[13px] text-[32px] leading-[38px] text-white">{text}</span>
      <span className="mb-2 ml-4 text-[23px] leading-7 text-[#f6eefa]">{time}</span>
      <span className="mb-3.5 ml-2 flex"><Checks /></span>
      {tail && <Tail side="right" className={tailTone} />}
    </div>
  );
}

const OUTGOING = [
  { text: "/redeem", time: "12:20", tone: "bg-linear-to-b from-[#934eae] to-[#8f4cb0]", tailTone: "", corners: "rounded-tr-[33px] rounded-br-xl" },
  { text: "/myplan", time: "12:20", tone: "bg-linear-to-b from-[#8e4cb0] to-[#8b4bb2]", tailTone: "", corners: "mt-1 rounded-r-xl" },
  { text: "/refer", time: "12:20", tone: "bg-linear-to-b from-[#8a4ab2] to-[#8749b5]", tailTone: "text-[#8749b5]", corners: "mt-1 rounded-tr-xl", tail: true },
  { text: "/refer", time: "12:25", tone: "bg-linear-to-b from-[#8548b7] to-[#8247b9]", tailTone: "", corners: "mt-3.5 rounded-tr-[33px] rounded-br-xl" },
  { text: "/start", time: "12:25", tone: "bg-linear-to-b from-[#8147bb] to-[#7e45bc]", tailTone: "text-[#7e45bc]", corners: "mt-1 rounded-tr-xl", tail: true },
];

const KEYS: { label: string; icon: ReactNode; shape: string }[] = [
  { label: "ᴄʜᴇᴄᴋ ᴄʀᴇᴅɪᴛꜱ", icon: <MoneyBag />, shape: "gap-3.5 rounded-xl" },
  { label: "ᴇᴀʀɴ ᴄʀᴇᴅɪᴛꜱ", icon: <BarChart />, shape: "gap-2.5 rounded-xl" },
  { label: "ʀᴇꜰᴇʀʀᴀʟ", icon: <Gift />, shape: "gap-2 rounded-xl" },
  { label: "ᴘʀᴇᴍɪᴜᴍ", icon: <Gem />, shape: "gap-2 rounded-t-xl rounded-b-[34px]" },
];

export default function App() {
  return (
    <div className={`flex min-h-screen flex-col bg-[#171e27] text-white ${ROBOTO}`}>
      <header className="bg-[#262c38]">
        <div className="flex h-[66px] items-center pr-[45px] pl-12">
          <span className="text-[25px] leading-7">12:25</span>
          <span className="mb-1 ml-[15px] flex size-6 items-center justify-center rounded-full bg-white text-sm text-[#262c38]">1</span>
          <div className="ml-auto"><StatusIcons /></div>
        </div>
        <div className="flex h-[110px] items-center pr-10">
          <button aria-label="Back" className="ml-9 flex size-10 items-center justify-center">
            <svg aria-hidden="true" viewBox="0 0 34 32" className="h-8 w-[34px]" fill="none" stroke="currentColor" strokeWidth="4" strokeLinecap="round" strokeLinejoin="round">
              <path d="M16 3L3 16L16 29M3 16H31" />
            </svg>
          </button>
          <div className="ml-[52px] flex size-[84px] shrink-0 items-center justify-center rounded-full bg-linear-to-b from-[#ff8aab] to-[#d65573] text-[29px] font-medium">F</div>
          <div className="ml-6 flex flex-col">
            <h1 className="text-[36px] leading-[42px] font-medium">ftm_playerbot</h1>
            <p className="text-[29px] leading-10 text-[#7c8b98]">bot</p>
          </div>
          <button aria-label="More options" className="ml-auto flex h-10 w-4 flex-col items-center justify-center gap-1">
            <span className="size-2 rounded-full bg-white" />
            <span className="size-2 rounded-full bg-white" />
            <span className="size-2 rounded-full bg-white" />
          </button>
        </div>
      </header>

      <main className="relative flex-1 overflow-hidden bg-[radial-gradient(ellipse_at_100%_0%,#131a2b_0%,transparent_55%),radial-gradient(ellipse_at_0%_85%,#152331_0%,transparent_60%),radial-gradient(ellipse_at_60%_45%,#131b29_0%,transparent_50%),linear-gradient(to_bottom,#0f171d,#0e141b)]">
        <Doodles />
        <div className="relative flex flex-col pb-3.5">
          <article className="relative ml-[22px] w-fit rounded-br-[34px] bg-[#232e3a] pr-[22px] pb-1.5 pl-[22px] text-[32px] leading-[38px]">
            <p>• ᴀᴅᴅ ᴡᴀᴛᴇʀᴍᴀʀᴋ • ᴍᴜᴛᴇ ᴠɪᴅᴇᴏ</p>
            <p>• ʀᴇᴘʟᴀᴄᴇ ᴀᴜᴅɪᴏ • ʀᴇᴠᴇʀꜱᴇ ᴠɪᴅᴇᴏ</p>
            <p>• ᴀᴅᴅ ꜱᴜʙᴛɪᴛʟᴇꜱ • ᴄʜᴀɴɢᴇ ʀᴇꜱᴏʟᴜᴛɪᴏɴ</p>
            <p>• ᴇxᴛʀᴀᴄᴛ ᴀᴜᴅɪᴏ • ᴛᴀᴋᴇ ꜱᴄʀᴇᴇɴꜱʜᴏᴛ</p>
            <p className="mt-[38px]">ᴇᴀᴄʜ ᴘʀᴏᴄᴇꜱꜱ ᴄᴏꜱᴛꜱ</p>
            <div className="flex items-end justify-between gap-4">
              <p className="mb-2 font-medium">{"{Config.PROCESS_COST}"} <b className="font-semibold">ᴄʀᴇᴅɪᴛꜱ</b></p>
              <time className="text-[23px] leading-7 text-[#6f7f8d]">12:20</time>
            </div>
            <Tail side="left" className="text-[#232e3a]" />
          </article>

          <section aria-label="Sent messages" className="mt-3 mr-[22px] flex flex-col items-end">
            {OUTGOING.map((m, i) => <Outgoing key={i} {...m} />)}
          </section>

          <div className="mt-3.5 ml-5 flex w-fit min-w-[592px] flex-col">
            <article className="relative ml-0.5 rounded-t-[36px] rounded-br-xl bg-[#232e3a] pt-3.5 pr-[22px] pb-1.5 pl-[22px] text-[32px] leading-[38px]">
              <p className="h-[38px] font-semibold"><Clapper />ᴡᴇʟᴄᴏᴍᴇ ʙᴀᴄᴋ!</p>
              <p className="mt-[38px]">ʏᴏᴜ ʜᴀᴠᴇ <b className="font-semibold">20 ᴄʀᴇᴅɪᴛꜱ</b> ʀᴇᴍᴀɪɴɪɴɢ.</p>
              <p className="mt-[38px]">ꜱᴇɴᴅ ᴍᴇ ᴀ ᴠɪᴅᴇᴏ ᴛᴏ ꜱᴛᴀʀᴛ ᴘʀᴏᴄᴇꜱꜱɪɴɢ!</p>
              <time className="mt-2 block text-right text-[23px] leading-7 text-[#6f7f8d]">12:25</time>
              <Tail side="left" className="text-[#232e3a]" />
            </article>
            <div className="mt-[7px] mr-0.5 flex flex-col gap-2">
              {KEYS.map((k) => (
                <button key={k.label} className={`flex h-[88px] items-center justify-center bg-[#7a90a02b] pt-1 text-[30px] leading-9 font-bold ${k.shape}`}>
                  {k.icon}
                  <span>{k.label}</span>
                </button>
              ))}
            </div>
          </div>
        </div>
      </main>

      <footer>
        <form className="flex h-[99px] items-center bg-[#222d3a] px-5 pr-6 text-[#6f7f8d]" onSubmit={(e) => e.preventDefault()}>
          <button type="button" className="mt-0.5 flex h-16 shrink-0 items-center gap-3 rounded-full bg-[#5ea6de] pr-5 pl-6 text-[30px] leading-9 font-medium text-white">
            <span className="flex w-8 flex-col gap-1.5">
              <span className="h-1 rounded-full bg-white" />
              <span className="h-1 rounded-full bg-white" />
              <span className="h-1 rounded-full bg-white" />
            </span>
            Menu
          </button>
          <button type="button" aria-label="Emoji" className="mt-0.5 ml-6 shrink-0">
            <svg aria-hidden="true" viewBox="0 0 48 48" className="size-12" fill="none" stroke="currentColor" strokeWidth="3.600" strokeLinecap="round">
              <circle cx="24" cy="24" r="22" />
              <path d="M15 29Q24 40 33 29" />
              <ellipse cx="16.500" cy="20" rx="2.600" ry="3.200" fill="currentColor" stroke="none" />
              <ellipse cx="31.500" cy="20" rx="2.600" ry="3.200" fill="currentColor" stroke="none" />
            </svg>
          </button>
          <span aria-hidden="true" className="mt-0.5 ml-[22px] h-12 w-1 shrink-0 bg-[#5ea6de]" />
          <input aria-label="Message" placeholder="Message" className="mt-1.5 h-12 min-w-0 flex-1 bg-transparent text-[35px] text-white outline-none placeholder:text-[#6f7f8d]" />
          <button type="button" aria-label="Attach" className="mt-0.5 mr-[50px] shrink-0">
            <svg aria-hidden="true" viewBox="0 0 42 48" className="h-12 w-[42px]" fill="none" stroke="currentColor" strokeWidth="3.400" strokeLinecap="round" strokeLinejoin="round">
              <path d="M3.500 18.500L15.500 7A13.600 13.600 0 0 1 35 26.500L21 41A10.300 10.300 0 0 1 6 26.500L21.500 12.500A6.400 6.400 0 0 1 30.500 21.500L16.500 34.500" />
            </svg>
          </button>
          <button type="button" aria-label="Camera" className="mt-0.5 shrink-0">
            <svg aria-hidden="true" viewBox="0 0 48 48" className="size-12" fill="none" stroke="currentColor" strokeWidth="3.600">
              <rect x="2" y="2" width="44" height="44" rx="12" />
              <circle cx="23.500" cy="24" r="10.300" />
            </svg>
          </button>
        </form>
        <div className="flex h-8 items-center justify-center pb-px">
          <span className="h-1.5 w-1/3 rounded-full bg-[#8e9296]" />
        </div>
      </footer>
    </div>
  );
}
